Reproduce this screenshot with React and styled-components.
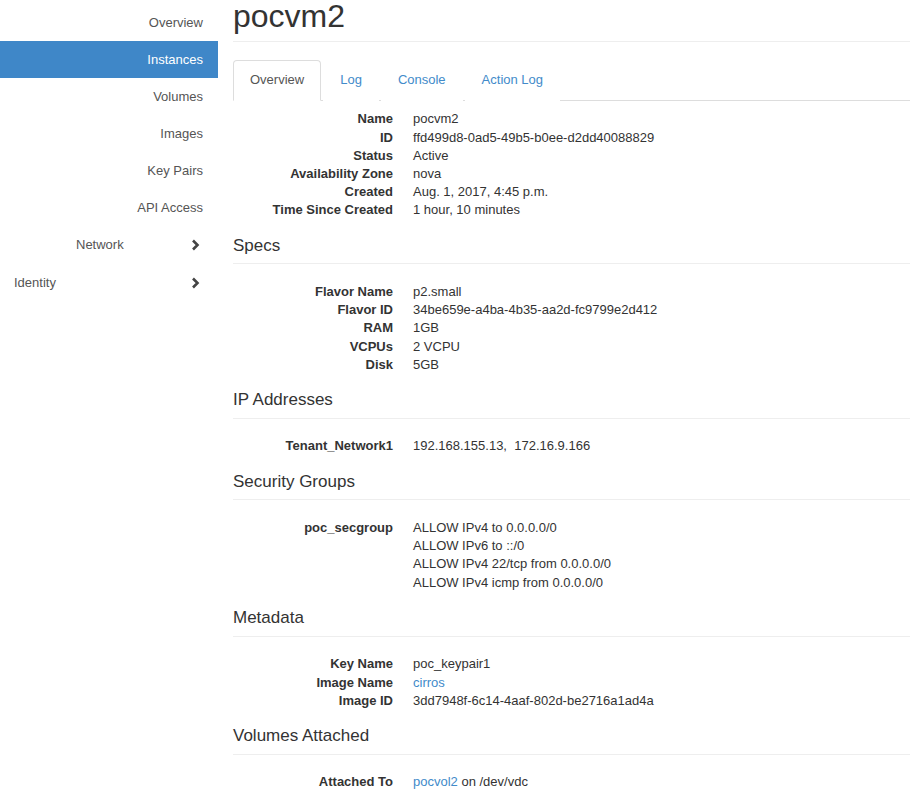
import { Fragment } from "react";
import { createGlobalStyle, styled } from "styled-components";

const GlobalStyle = createGlobalStyle`
    body {
        margin: 0;
        font-family: "Liberation Sans", Arial, sans-serif;
        font-size: 13px;
        line-height: 1.4;
        color: #333;
        background: #fff;
    }
`;

const Page = styled.div`
    display: flex;
    align-items: flex-start;
`;

const Sidebar = styled.nav`
    width: 218px;
    flex-shrink: 0;
    padding-top: 4px;
`;

const NavItem = styled.a`
    display: block;
    height: 37px;
    line-height: 37px;
    padding-right: 15px;
    text-align: right;
    color: ${p => (p.active ? "#fff" : "#555")};
    background: ${p => (p.active ? "#3f87c8" : "transparent")};
    text-decoration: none;
    cursor: pointer;
`;

const NavGroup = styled.div`
    display: flex;
    align-items: center;
    justify-content: space-between;
    height: 38px;
    padding-left: ${p => p.indent}px;
    padding-right: 18px;
    color: #555;
    cursor: pointer;
`;

const Chevron = () => (
    <svg width="9" height="12" viewBox="0 0 9 12">
        <polyline points="2,1.5 6.5,6 2,10.5" fill="none" stroke="#444" strokeWidth="2.6" />
    </svg>
);

const Content = styled.main`
    flex: 1;
    margin-left: 15px;
    min-width: 0;
`;

const Title = styled.h1`
    margin: -1px 0 0;
    padding-bottom: 7px;
    font-size: 32px;
    font-weight: normal;
    line-height: 1.1;
    border-bottom: 1px solid #eee;
`;

const Tabs = styled.ul`
    display: flex;
    list-style: none;
    margin: 18px 0 0;
    padding: 0;
    border-bottom: 1px solid #ddd;
`;

const Tab = styled.li`
    margin-right: 2px;
    margin-bottom: -1px;
    padding: 10px 16px 11px;
    border: 1px solid ${p => (p.active ? "#ddd" : "transparent")};
    border-bottom-color: ${p => (p.active ? "#fff" : "transparent")};
    border-radius: 4px 4px 0 0;
    background: #fff;
    color: ${p => (p.active ? "#555" : "#428bca")};
    cursor: pointer;
`;

const DetailList = styled.dl`
    display: grid;
    grid-template-columns: 160px 1fr;
    column-gap: 20px;
    margin: ${p => (p.first ? "9px" : "0")} 0 0;
    > dt {
        font-weight: bold;
        text-align: right;
    }
    > dd {
        margin: 0;
    }
`;

const SectionTitle = styled.h4`
    margin: 17px 0 18.8px;
    padding-bottom: 8px;
    font-size: 17px;
    font-weight: normal;
    line-height: 1.1;
    border-bottom: 1px solid #eee;
`;

const Link = styled.a`
    color: #428bca;
    text-decoration: none;
`;

const Details = ({ rows, first }) => (
    <DetailList first={first}>
        {rows.map(([label, value]) => (
            <Fragment key={label}>
                <dt>{label}</dt>
                <dd>{value}</dd>
            </Fragment>
        ))}
    </DetailList>
);

const navItems = ["Overview", "Instances", "Volumes", "Images", "Key Pairs", "API Access"];

const App = () => (
    <Page>
        <GlobalStyle />
        <Sidebar>
            {navItems.map(item => (
                <NavItem key={item} active={item === "Instances"}>{item}</NavItem>
            ))}
            <NavGroup indent={76}>
                <span>Network</span>
                <Chevron />
            </NavGroup>
            <NavGroup indent={14}>
                <span>Identity</span>
                <Chevron />
            </NavGroup>
        </Sidebar>
        <Content>
            <Title>pocvm2</Title>
            <Tabs>
                <Tab active>Overview</Tab>
                <Tab>Log</Tab>
                <Tab>Console</Tab>
                <Tab>Action Log</Tab>
            </Tabs>
            <Details
                first
                rows={[
                    ["Name", "pocvm2"],
                    ["ID", "ffd499d8-0ad5-49b5-b0ee-d2dd40088829"],
                    ["Status", "Active"],
                    ["Availability Zone", "nova"],
                    ["Created", "Aug. 1, 2017, 4:45 p.m."],
                    ["Time Since Created", "1 hour, 10 minutes"],
                ]}
            />
            <SectionTitle>Specs</SectionTitle>
            <Details
                rows={[
                    ["Flavor Name", "p2.small"],
                    ["Flavor ID", "34be659e-a4ba-4b35-aa2d-fc9799e2d412"],
                    ["RAM", "1GB"],
                    ["VCPUs", "2 VCPU"],
                    ["Disk", "5GB"],
                ]}
            />
            <SectionTitle>IP Addresses</SectionTitle>
            <Details rows={[["Tenant_Network1", "192.168.155.13,\u00a0 172.16.9.166"]]} />
            <SectionTitle>Security Groups</SectionTitle>
            <Details
                rows={[
                    [
                        "poc_secgroup",
                        <>
                            <div>ALLOW IPv4 to 0.0.0.0/0</div>
                            <div>ALLOW IPv6 to ::/0</div>
                            <div>ALLOW IPv4 22/tcp from 0.0.0.0/0</div>
                            <div>ALLOW IPv4 icmp from 0.0.0.0/0</div>
                        </>,
                    ],
                ]}
            />
            <SectionTitle>Metadata</SectionTitle>
            <Details
                rows={[
                    ["Key Name", "poc_keypair1"],
                    ["Image Name", <Link>cirros</Link>],
                    ["Image ID", "3dd7948f-6c14-4aaf-802d-be2716a1ad4a"],
                ]}
            />
            <SectionTitle>Volumes Attached</SectionTitle>
            <Details rows={[["Attached To", <><Link>pocvol2</Link> on /dev/vdc</>]]} />
        </Content>
    </Page>
);

export default App;
